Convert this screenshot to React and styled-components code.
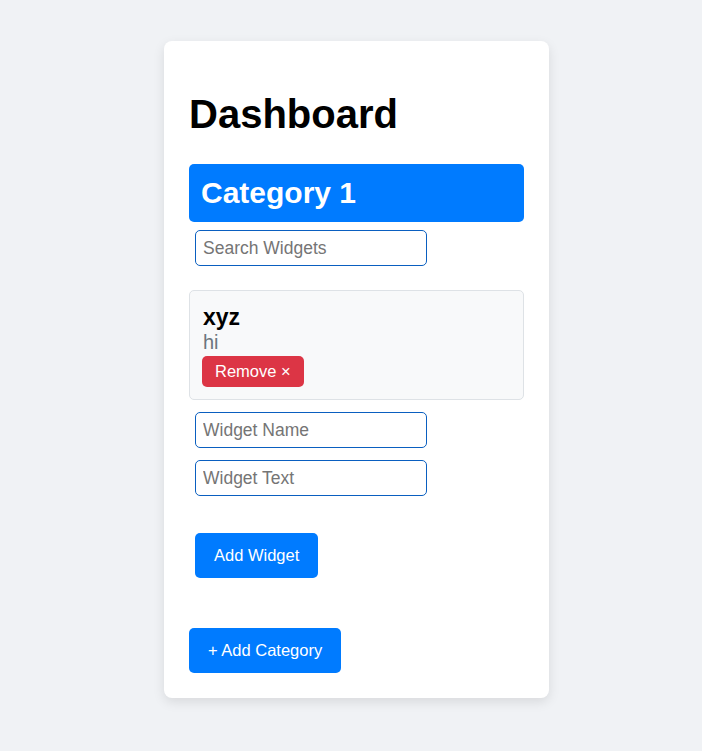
import React from "react";
import styled, { createGlobalStyle } from "styled-components";

const GlobalStyle = createGlobalStyle`
  body {
    margin: 0;
    background-color: #f0f2f5;
    font-family: "Liberation Sans", Arial, sans-serif;
  }
`;

const Page = styled.div`
  display: flex;
  justify-content: center;
  padding: 41px 0 53px 11px;
`;

const Card = styled.div`
  box-sizing: border-box;
  width: 385px;
  padding: 25px;
  background-color: #ffffff;
  border-radius: 8px;
  box-shadow: 0 4px 12px rgba(0, 0, 0, 0.1);
`;

const Title = styled.h1`
  margin: 26px 0 27px;
  font-size: 40px;
  font-weight: bold;
  color: #000000;
`;

const CategoryBox = styled.div`
  display: flex;
  flex-direction: column;
  align-items: flex-start;
`;

const CategoryTitle = styled.h2`
  align-self: stretch;
  margin: 0;
  padding: 12px;
  font-size: 30px;
  font-weight: bold;
  color: #ffffff;
  background-color: #007bff;
  border-radius: 5px;
`;

const Input = styled.input`
  box-sizing: border-box;
  width: 232px;
  height: 36px;
  margin: ${(p) => p.$top}px 6px 0;
  padding: 8px 7px;
  font-family: "Liberation Sans", Arial, sans-serif;
  font-size: 17.5px;
  border: 1px solid #0a5fc0;
  border-radius: 5px;
  background: #ffffff;
  outline: none;

  &::placeholder {
    color: #757575;
  }
`;

const WidgetCard = styled.div`
  box-sizing: border-box;
  align-self: stretch;
  margin-top: 24px;
  padding: 13px 12px 12px;
  background-color: #f8f9fa;
  border: 1px solid #dee2e6;
  border-radius: 5px;
`;

const WidgetName = styled.h3`
  margin: 0;
  padding-left: 1px;
  font-size: 23px;
  font-weight: bold;
  color: #000000;
`;

const WidgetText = styled.p`
  margin: 0 0 2px;
  padding-left: 1px;
  font-size: 20px;
  color: #6c757d;
`;

const Button = styled.button`
  box-sizing: border-box;
  height: ${(p) => (p.$small ? "31px" : "45px")};
  margin: ${(p) => p.$margin || "0"};
  padding: ${(p) => (p.$small ? "0 13px" : "0 19px")};
  font-family: "Liberation Sans", Arial, sans-serif;
  font-size: 16.5px;
  line-height: normal;
  color: #ffffff;
  background-color: ${(p) => (p.$danger ? "#dc3545" : "#007bff")};
  border: none;
  border-radius: 5px;
  cursor: pointer;
`;

export default function App() {
  return (
    <>
      <GlobalStyle />
      <Page>
        <Card>
          <Title>Dashboard</Title>
          <CategoryBox>
            <CategoryTitle>Category 1</CategoryTitle>
            <Input $top={8} placeholder="Search Widgets" />
            <WidgetCard>
              <WidgetName>xyz</WidgetName>
              <WidgetText>hi</WidgetText>
              <Button $small $danger>
                Remove ×
              </Button>
            </WidgetCard>
            <Input $top={12} placeholder="Widget Name" />
            <Input $top={12} placeholder="Widget Text" />
            <Button $margin="37px 6px 0">Add Widget</Button>
          </CategoryBox>
          <Button $margin="50px 0 0">+ Add Category</Button>
        </Card>
      </Page>
    </>
  );
}
